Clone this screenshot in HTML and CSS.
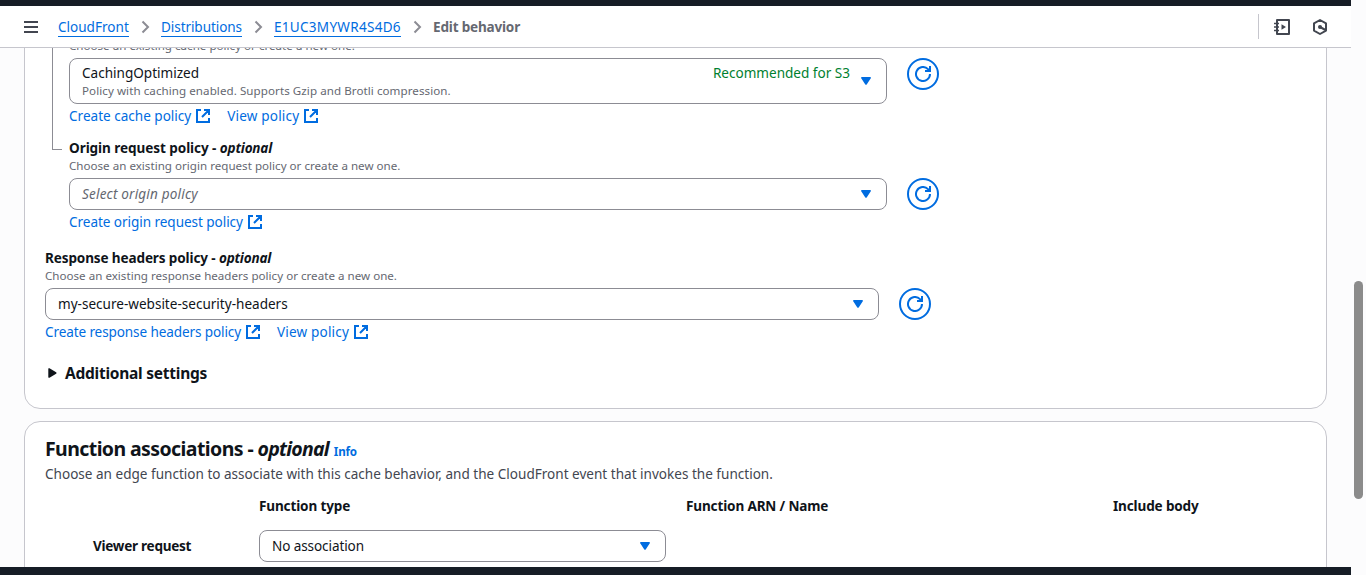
FILE: index.html
```
<!DOCTYPE html>
<html lang="en">
<head>
<meta charset="utf-8">
<title>Edit behavior</title>
<link rel="stylesheet" href="styles.css">
</head>
<body>
<svg class="defs" width="0" height="0">
  <symbol id="external" viewBox="0 0 16 16"><path d="M6 2H2v12h12v-4M9 2h5v5M14 2 7 9" fill="none" stroke="currentColor" stroke-width="2"/></symbol>
  <symbol id="refresh" viewBox="0 0 16 16"><path d="M15 8a7 7 0 1 1-2-4.9L14.6 5M15 0v5h-5" fill="none" stroke="currentColor" stroke-width="2"/></symbol>
  <symbol id="caret" viewBox="0 0 12 10"><path d="M1.8 1h8.4a.8.8 0 0 1 .6 1.3L6.7 8.4a.9.9 0 0 1-1.4 0L1.2 2.3A.8.8 0 0 1 1.8 1z" fill="currentColor"/></symbol>
  <symbol id="chevron" viewBox="0 0 10 14"><path d="m1.5 1.5 5.5 5.5-5.5 5.5" fill="none" stroke="currentColor" stroke-width="2"/></symbol>
</svg>
<div class="app">
  <div class="window">
    <header class="topbar">
      <svg class="menu" width="14" height="12" viewBox="0 0 14 12"><path d="M0 1h14M0 6h14M0 11h14" stroke="#424650" stroke-width="2"/></svg>
      <nav class="crumbs">
        <a class="w-cf">CloudFront</a><svg class="chevron"><use href="#chevron"/></svg>
        <a class="w-dist">Distributions</a><svg class="chevron"><use href="#chevron"/></svg>
        <a class="w-id">E1UC3MYWR4S4D6</a><svg class="chevron"><use href="#chevron"/></svg>
        <b>Edit behavior</b>
      </nav>
      <div class="tools">
        <svg width="18" height="18" viewBox="0 0 18 18" fill="none" stroke="#424650" stroke-width="2"><path d="M4 2h12v14H4z" stroke-linejoin="round"/><path d="M1 5.5h5M1 9h5M1 12.5h5" stroke-width="1.6"/><path d="M8.5 6.2 13 9l-4.5 2.8z" fill="#424650" stroke="none"/></svg>
        <svg width="16" height="18" viewBox="0 0 16 18" fill="none" stroke="#424650" stroke-width="2" stroke-linejoin="round"><path d="m8 2 6 3.4v7.2L8 16l-6-3.4V5.4z"/><path d="m8 9 5.5 3"/><circle cx="8" cy="9" r="2" fill="#424650" stroke="none"/></svg>
      </div>
    </header>
    <main class="content">
      <section class="card policies">
        <div class="tree">
          <div class="branch"></div>
          <div class="fields">
            <p class="hint">Choose an existing cache policy or create a new one.</p>
            <div class="row">
              <div class="select tall">
                <div class="option"><span>CachingOptimized</span><small>Policy with caching enabled. Supports Gzip and Brotli compression.</small></div>
                <span class="tag">Recommended for S3</span>
                <svg class="caret"><use href="#caret"/></svg>
              </div>
              <button class="refresh"><svg><use href="#refresh"/></svg></button>
            </div>
            <div class="links">
              <a>Create cache policy<svg><use href="#external"/></svg></a>
              <a><span class="w-view">View policy</span><svg><use href="#external"/></svg></a>
            </div>
            <h3 class="origin">Origin request policy - <i>optional</i></h3>
            <p class="hint">Choose an existing origin request policy or create a new one.</p>
            <div class="row">
              <div class="select"><i class="placeholder">Select origin policy</i><svg class="caret"><use href="#caret"/></svg></div>
              <button class="refresh"><svg><use href="#refresh"/></svg></button>
            </div>
            <div class="links"><a><span class="w-origin">Create origin request policy</span><svg><use href="#external"/></svg></a></div>
          </div>
        </div>
        <h3 class="response">Response headers policy - <i>optional</i></h3>
        <p class="hint">Choose an existing response headers policy or create a new one.</p>
        <div class="row wide">
          <div class="select"><span>my-secure-website-security-headers</span><svg class="caret"><use href="#caret"/></svg></div>
          <button class="refresh"><svg><use href="#refresh"/></svg></button>
        </div>
        <div class="links">
          <a><span class="w-resp">Create response headers policy</span><svg><use href="#external"/></svg></a>
          <a><span class="w-view">View policy</span><svg><use href="#external"/></svg></a>
        </div>
        <div class="expander"><svg width="9" height="10" viewBox="0 0 9 10"><path d="M.3 1v8a.8.8 0 0 0 1.2.7l6.6-4a.8.8 0 0 0 0-1.4L1.5.3A.8.8 0 0 0 .3 1z" fill="#0f141a"/></svg>Additional settings</div>
      </section>
      <section class="card functions">
        <h2>Function associations - <i>optional</i><a class="info">Info</a></h2>
        <p class="lead">Choose an edge function to associate with this cache behavior, and the CloudFront event that invokes the function.</p>
        <div class="grid heads"><span></span><b>Function type</b><b>Function ARN / Name</b><b>Include body</b></div>
        <div class="grid"><b class="event">Viewer request</b><div class="select"><span class="w-none">No association</span><svg class="caret"><use href="#caret"/></svg></div></div>
      </section>
    </main>
  </div>
  <aside class="scroll"><div class="thumb"></div></aside>
</div>
</body>
</html>
```
FILE: styles.css
```
* { box-sizing: border-box; margin: 0; padding: 0; }
body { font: 13.55px/20px "Noto Sans", "Open Sans", sans-serif; color: #0f141a; background: #fcfcfd; overflow: hidden; }
.defs { display: block; }
.app { display: flex; height: 575px; }
.window { width: 1351px; height: 575px; display: flex; flex-direction: column; border-top: 6px solid #161d26; border-bottom: 8px solid #161d26; }
.topbar { height: 42px; flex: none; display: flex; align-items: center; background: #fff; border-bottom: 1px solid #c6c6cd; padding: 0 23px 0 24px; }
.menu { margin-right: 20px; }
.crumbs { display: flex; align-items: center; flex: 1; }
.crumbs a { color: #006ce0; border-bottom: 1px solid #006ce0; height: 20px; line-height: 20px; white-space: nowrap; margin-top: 1px; }
.crumbs b { font-weight: 700; letter-spacing: -.19px; color: #656871; }
.chevron { width: 10px; height: 14px; color: #8c8c94; margin: 0 10px 0 12px; }
.w-cf { width: 71px; }
.w-dist { width: 81px; letter-spacing: -.08px; }
.w-id { width: 127px; letter-spacing: .27px; }
.tools { display: flex; align-items: center; gap: 21px; border-left: 1px solid #c6c6cd; height: 25px; padding-left: 14px; }
.content { flex: 1; overflow: hidden; }
.card { width: 1303px; margin-left: 24px; border: 1px solid #c6c6cd; border-radius: 16px; background: #fff; padding: 0 20px; }
.policies { margin-top: -38px; height: 399px; padding-top: 27px; }
.functions { height: 300px; margin-top: 12px; padding-top: 14px; }
.tree { display: flex; }
.branch { width: 10px; height: 112px; margin: 0 7px; border: solid #8c8c94; border-width: 0 0 1px 1px; }
.hint { font-size: 11.6px; line-height: 16px; color: #656871; margin-bottom: 4px; letter-spacing: .01px; }
.row { display: flex; align-items: flex-start; gap: 20px; }
.select { width: 818px; height: 32px; border: 1px solid #8c8c94; border-radius: 8px; display: flex; align-items: center; padding: 0 14px 0 12px; background: #fff; }
.wide .select { width: 834px; }
.tall { height: 46px; align-items: flex-start; padding-top: 4px; }
.option { display: flex; flex-direction: column; }
.option small { font-size: 11.6px; line-height: 16px; color: #656871; letter-spacing: .06px; }
.tag { margin-left: auto; color: #00802f; }
.caret { width: 12px; height: 10px; color: #006ce0; margin-left: auto; flex: none; }
.tall .caret { margin: 13px 0 0 10px; }
.placeholder { color: #656871; letter-spacing: .18px; }
.refresh { width: 32px; height: 32px; border: 2px solid #006ce0; border-radius: 50%; background: #fff; color: #006ce0; display: grid; place-items: center; }
.refresh svg { width: 16px; height: 16px; }
.links { display: flex; gap: 16px; color: #006ce0; height: 20px; margin-top: 2px; }
.links a { display: flex; align-items: center; white-space: nowrap; }
.links svg { width: 16px; height: 16px; margin-left: 4px; }
.w-view { width: 72px; letter-spacing: .17px; }
.w-origin { letter-spacing: -.05px; }
.w-resp { letter-spacing: -.11px; }
h3 { font-size: 13.55px; line-height: 20px; font-weight: 700; }
.origin { margin-top: 12px; letter-spacing: -.07px; }
.response { margin-top: 16px; letter-spacing: -.13px; }
.origin i, .response i { letter-spacing: -.2px; }
.expander { display: flex; align-items: center; gap: 8px; margin: 19px 0 0 3px; font-size: 15.5px; line-height: 24px; font-weight: 700; letter-spacing: -.25px; }
h2 { font-size: 19.5px; line-height: 26px; font-weight: 700; letter-spacing: -.59px; }
h2 i { letter-spacing: -.76px; }
.info { font-size: 11.6px; color: #006ce0; letter-spacing: -.2px; margin-left: 5px; }
.lead { color: #424650; margin-top: -1px; letter-spacing: .003px; }
.grid { display: grid; grid-template-columns: 214px 427px 427px 190px; align-items: center; }
.grid b { font-weight: 700; letter-spacing: -.15px; }
.heads { margin: 12px 0 14px; }
.grid .event { padding-left: 48px; letter-spacing: -.27px; }
.grid .select { width: 407px; }
.w-none { letter-spacing: -.1px; }
.scroll { width: 15px; padding: 281px 0 0 3px; background: #fcfcfd; }
.thumb { width: 9px; height: 218px; border-radius: 5px; background: #8b8b8b; }
```
